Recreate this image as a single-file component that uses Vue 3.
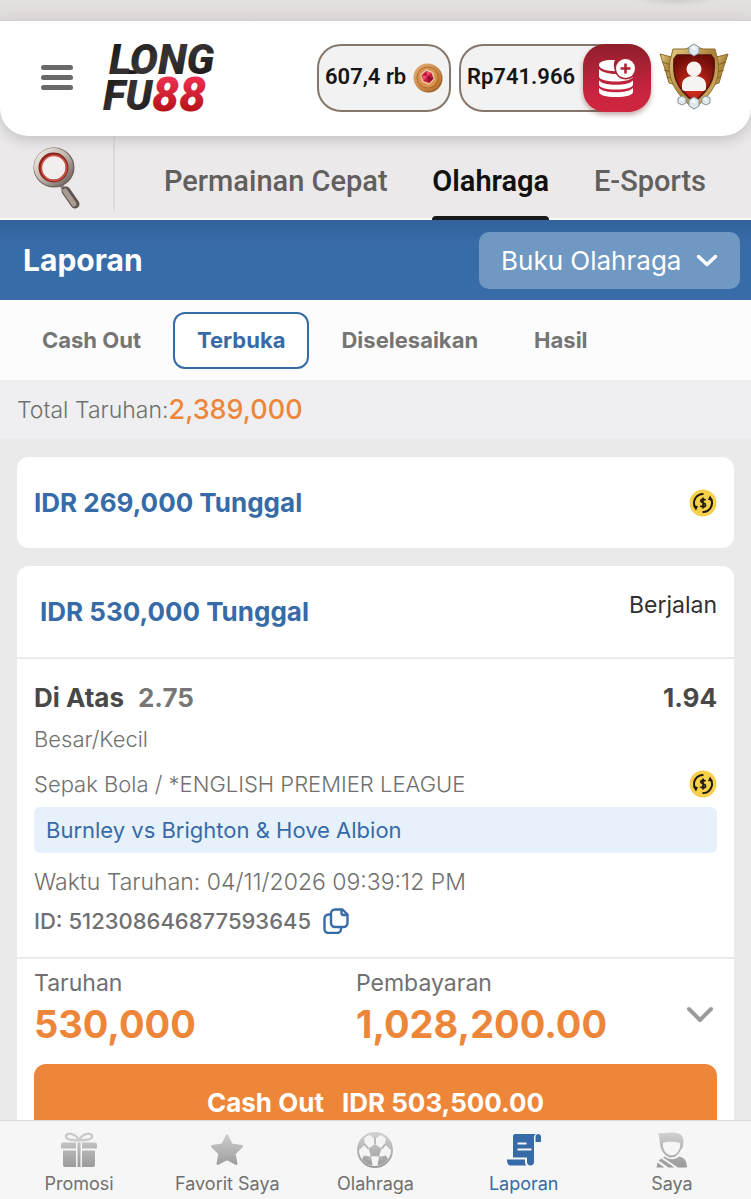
<template>
  <div class="app-shell">
    <!-- shared gradients for the icons -->
    <svg class="defs" width="0" height="0" aria-hidden="true">
      <defs>
        <linearGradient id="navGrey" x1="0" y1="0" x2="0" y2="34" gradientUnits="userSpaceOnUse">
          <stop offset="0" stop-color="#d2d2d2" />
          <stop offset="1" stop-color="#9c9c9c" />
        </linearGradient>
        <linearGradient id="logoDark" x1="0" y1="0" x2="1" y2="1">
          <stop offset="0" stop-color="#111" />
          <stop offset="0.5" stop-color="#3a3535" />
          <stop offset="1" stop-color="#111" />
        </linearGradient>
        <linearGradient id="logoRed" x1="0" y1="0" x2="0" y2="1">
          <stop offset="0.2" stop-color="#ee2f50" />
          <stop offset="0.8" stop-color="#b51218" />
        </linearGradient>
        <linearGradient id="gold" x1="0" y1="0" x2="1" y2="1">
          <stop offset="0" stop-color="#e9d08a" />
          <stop offset="0.5" stop-color="#a9823a" />
          <stop offset="1" stop-color="#e3c678" />
        </linearGradient>
        <radialGradient id="shieldRed" cx="0.5" cy="0.7" r="0.7">
          <stop offset="0" stop-color="#e0301c" />
          <stop offset="1" stop-color="#6e0d08" />
        </radialGradient>
        <linearGradient id="bronze" x1="0" y1="0" x2="1" y2="1">
          <stop offset="0" stop-color="#eab07a" />
          <stop offset="1" stop-color="#b06a22" />
        </linearGradient>
        <linearGradient id="steel" x1="0" y1="0" x2="1" y2="1">
          <stop offset="0" stop-color="#f3eee8" />
          <stop offset="0.5" stop-color="#bfb5ac" />
          <stop offset="1" stop-color="#6d625b" />
        </linearGradient>
      </defs>
    </svg>

    <div class="top-strip"></div>

    <header class="site-header">
      <button class="menu-btn" type="button" aria-label="Menu">
        <span></span><span></span><span></span>
      </button>
      <a class="logo" href="#" aria-label="LONGFU88">
        <svg width="114" height="72" viewBox="0 0 114 72">
          <path d="M10 27h14c5 2 12 2 18-2l-3 5c-4 2-8 2-12 2H9z" fill="#1d1a1a" />
          <path d="M25 20c-1 4 1 6 4 6" fill="none" stroke="#fff" stroke-width="2" />
          <text x="6" y="32" class="logo-text" fill="url(#logoDark)">LONG</text>
          <text x="0" y="68" class="logo-text" fill="url(#logoDark)">FU</text>
          <text x="49" y="69" class="logo-text logo-number" fill="url(#logoRed)">88</text>
        </svg>
      </a>

      <div class="wallet">
        <div class="pill pill-coin">
          <span>607,4 rb</span>
          <svg width="30" height="30" viewBox="0 0 30 30">
            <circle cx="15.5" cy="15.5" r="14" fill="#99601f" />
            <circle cx="14.5" cy="14.5" r="14" fill="url(#bronze)" />
            <circle cx="14.5" cy="14.5" r="10.5" fill="#d99250" stroke="#ac6b2c" />
            <path d="M13 6l7 3 2 7-6 6-7-3-2-7z" fill="#e9c3a0" />
            <path d="M13 8l5.500 2 2 5.500-4.500 4.500-5.500-2-2-5.500z" fill="#c3183a" />
            <path d="M13 8l1.500 5 4-3zM8.500 12.500l6 .5-4 5z" fill="#ee5070" />
            <path d="M14.500 13l6 2.500-4.500 4.500z" fill="#8e0f2a" />
          </svg>
        </div>
        <div class="pill pill-balance">
          <span>Rp741.966</span>
          <button class="deposit-btn" type="button" aria-label="Deposit">
            <svg width="38" height="40" viewBox="0 0 38 40" fill="#fff">
              <path d="M17 2.200C8 1.700 1 3.500 1 7s7 6.200 17 6.200c-2.500-3.500-3-7.500-1-11z" />
              <path d="M1 11c3 3.500 10 5 18 5 2 2 5 3.500 8 3.500 3 0 6-1 8-2.800v2.300c-2 3-9 4.500-17 4.500S1 22 1 18.500z" />
              <path d="M1 22.500c3 3 9 4.300 17 4.300s14-1.300 17-4.300v4c0 3-7 5-17 5s-17-2-17-5z" />
              <path d="M1 30c3 3 9 4.300 17 4.300S32 33 35 30v4c0 3-7 5-17 5s-17-2-17-5z" />
              <circle cx="27.500" cy="10.500" r="11" fill="#a92533" />
              <circle cx="27.500" cy="10.500" r="9.500" />
              <path d="M27.500 5.500v10M22.500 10.500h10" stroke="#b02434" stroke-width="2.600" />
            </svg>
          </button>
        </div>
        <a class="avatar" href="#" aria-label="Profil">
          <svg width="70" height="70" viewBox="0 0 70 70">
            <path d="M1 11l15 4 0 27-6-2-4-14z" fill="url(#gold)" stroke="#8d6c2c" />
            <path d="M69 11l-15 4 0 27 6-2 4-14z" fill="url(#gold)" stroke="#8d6c2c" />
            <path d="M3 19l12 4M5 27l10 3M8 34l8 2M67 19l-12 4M65 27l-10 3M62 34l-8 2" stroke="#7d5d22" />
            <path d="M14 6h12l9-3 9 3h12l3 12c2 16-2 30-24 48C13 48 9 34 11 18z" fill="url(#gold)" stroke="#8d6c2c" />
            <path d="M18 12h34l3 4c1 15 0 27-20 43C15 43 14 31 15 16z" fill="url(#shieldRed)" stroke="#5a1208" stroke-width="1.500" />
            <circle cx="35" cy="26" r="7.500" fill="#f6f3f1" />
            <path d="M23 42c0-6 5-9 12-9s12 3 12 9v3c0 2-1 3-3 3H26c-2 0-3-1-3-3z" fill="#f6f3f1" />
            <g fill="#dfe8ef" stroke="#8a949c">
              <path d="M35 1l5 3v6l-5 3-5-3V4z" />
              <path d="M35 54l5 3v6l-5 3-5-3v-6z" />
              <path d="M23 53l4 2v5l-4 2-4-2v-5z" />
              <path d="M47 53l4 2v5l-4 2-4-2v-5z" />
            </g>
            <path d="M32 5l3-2 2 4zM32 59l3-3 2 4zM21 57l2-2 1 3zM45 57l2-2 1 3z" fill="#fff" />
          </svg>
        </a>
      </div>
    </header>

    <nav class="category-bar">
      <button class="search-btn" type="button" aria-label="Cari">
        <svg width="48" height="62" viewBox="0 0 48 62">
          <path d="M28 38l5 7" stroke="#8f857e" stroke-width="4" />
          <path d="M33 44l9 13" stroke="#5e544e" stroke-width="9" stroke-linecap="round" />
          <path d="M32 44l9 13" stroke="#a89c92" stroke-width="5" stroke-linecap="round" />
          <ellipse cx="21" cy="20.500" rx="17.500" ry="17" fill="none" stroke="#70655e" stroke-width="6" />
          <ellipse cx="20.500" cy="20" rx="17" ry="16.500" fill="none" stroke="url(#steel)" stroke-width="5" />
          <ellipse cx="20.500" cy="20.500" rx="13.500" ry="13.500" fill="#f1efee" stroke="#8e2620" stroke-width="3" />
          <ellipse cx="21" cy="21" rx="12.500" ry="12.500" fill="none" stroke="#d3564c" stroke-width="1.500" />
        </svg>
      </button>
      <div class="category-list">
        <a
          v-for="cat in categories"
          :key="cat"
          href="#"
          class="category"
          :class="{ active: cat === activeCategory }"
          @click.prevent="activeCategory = cat"
        >{{ cat }}</a>
      </div>
    </nav>

    <main class="report">
      <div class="report-header">
        <h1>Laporan</h1>
        <div class="select-wrap">
          <select v-model="book" aria-label="Jenis laporan">
            <option>Buku Olahraga</option>
          </select>
          <svg class="select-arrow" width="22" height="14" viewBox="0 0 22 14">
            <path d="M2.500 2.500L11 10.500l8.500-8" fill="none" stroke="#fff" stroke-width="3.500" stroke-linecap="round" stroke-linejoin="round" />
          </svg>
        </div>
      </div>

      <div class="filter-tabs">
        <button
          v-for="tab in tabs"
          :key="tab"
          type="button"
          class="filter-tab"
          :class="{ active: tab === activeTab }"
          @click="activeTab = tab"
        >{{ tab }}</button>
      </div>

      <div class="total-row">
        <span>Total Taruhan:</span><strong>2,389,000</strong>
      </div>

      <div class="bet-list">
        <section class="card">
          <div class="card-head">
            <h2>IDR 269,000 Tunggal</h2>
            <svg class="cash-icon" viewBox="0 0 28 28">
              <circle cx="14" cy="14" r="13.500" fill="#f7d04a" />
              <path d="M14.500 5A9 9 0 0 0 6 18M13.500 23A9 9 0 0 0 22 10" fill="none" stroke="#1d1a12" stroke-width="2" />
              <path d="M4 16.500l5 .5-2 4.500zM24 11.500l-5-.5 2-4.500z" fill="#1d1a12" />
              <path d="M16.500 11.200c-.7-1-4.600-1.400-4.800.7-.2 2.300 5 1.700 4.900 4.200-.1 2.200-4.300 2-5.300.5M14 8.500v11" fill="none" stroke="#1d1a12" stroke-width="1.700" />
            </svg>
          </div>
        </section>

        <section class="card">
          <div class="card-head card-head-open">
            <h2>IDR 530,000 Tunggal</h2>
            <span class="status">Berjalan</span>
          </div>

          <div class="bet-body">
            <div class="row selection">
              <div>
                <strong>Di Atas</strong><span class="handicap">2.75</span>
              </div>
              <strong>1.94</strong>
            </div>
            <p class="market">Besar/Kecil</p>
            <div class="row league">
              <span>Sepak Bola / *ENGLISH PREMIER LEAGUE</span>
              <svg class="cash-icon" viewBox="0 0 28 28">
                <circle cx="14" cy="14" r="13.500" fill="#f7d04a" />
                <path d="M14.500 5A9 9 0 0 0 6 18M13.500 23A9 9 0 0 0 22 10" fill="none" stroke="#1d1a12" stroke-width="2" />
                <path d="M4 16.500l5 .5-2 4.500zM24 11.500l-5-.5 2-4.500z" fill="#1d1a12" />
                <path d="M16.500 11.200c-.7-1-4.600-1.400-4.800.7-.2 2.300 5 1.700 4.900 4.200-.1 2.200-4.300 2-5.300.5M14 8.500v11" fill="none" stroke="#1d1a12" stroke-width="1.700" />
              </svg>
            </div>
            <div class="match">Burnley vs Brighton &amp; Hove Albion</div>
            <p class="bet-time">Waktu Taruhan: 04/11/2026 09:39:12 PM</p>
            <div class="bet-id">
              <span>ID: 512308646877593645</span>
              <button class="copy-btn" type="button" aria-label="Salin ID">
                <svg width="26" height="26" viewBox="0 0 26 26" fill="none" stroke="#376ba7" stroke-width="2.400" stroke-linejoin="round">
                  <path d="M12 1.500h7.500l5 5V15a4 4 0 0 1-4 4H12a4 4 0 0 1-4-4V5.500a4 4 0 0 1 4-4z" />
                  <path d="M18.500 1.500V5a2 2 0 0 0 2 2h4" />
                  <path d="M8 6.500H5.500a4 4 0 0 0-4 4V21a4 4 0 0 0 4 4H14a4 4 0 0 0 4-4v-2" />
                </svg>
              </button>
            </div>
          </div>

          <div class="summary">
            <div class="summary-item">
              <span>Taruhan</span>
              <strong>530,000</strong>
            </div>
            <div class="summary-item">
              <span>Pembayaran</span>
              <strong>1,028,200.00</strong>
            </div>
            <button class="expand-btn" type="button" aria-label="Detail">
              <svg width="28" height="18" viewBox="0 0 28 18">
                <path d="M3 3l11 11L25 3" fill="none" stroke="#9b9b9b" stroke-width="4" stroke-linecap="round" stroke-linejoin="round" />
              </svg>
            </button>
          </div>

          <button class="cashout-btn" type="button">
            <span>Cash Out</span><span>IDR 503,500.00</span>
          </button>
        </section>
      </div>
    </main>

    <nav class="bottom-nav">
      <a href="#" class="nav-item">
        <svg width="36" height="36" viewBox="0 0 36 36" fill="url(#navGrey)">
          <path d="M0 12.500a2 2 0 0 1 2-2h13v6H0zM21 10.500h13a2 2 0 0 1 2 2v4H21zM16.500 10.500h3V35h-3zM2 18.500h13V35H4a2 2 0 0 1-2-2zM21 18.500h13V33a2 2 0 0 1-2 2H21z" />
          <path d="M18 8C14 1 5 0 5 4.500 5 8 13 8.500 18 8c5 .5 13 0 13-3.500C31 0 22 1 18 8z" fill="none" stroke="#cbcbcb" stroke-width="2.400" />
        </svg>
        <span>Promosi</span>
      </a>
      <a href="#" class="nav-item">
        <svg width="36" height="36" viewBox="0 0 36 36">
          <path d="M18 3.500l4.600 9.300 10.200 1.500-7.400 7.200 1.800 10.200L18 26.900l-9.200 4.800 1.800-10.200-7.400-7.200 10.200-1.500z" fill="url(#navGrey)" stroke="url(#navGrey)" stroke-width="2.500" stroke-linejoin="round" />
        </svg>
        <span>Favorit Saya</span>
      </a>
      <a href="#" class="nav-item">
        <svg width="36" height="36" viewBox="0 0 36 36">
          <circle cx="18" cy="18" r="17" fill="#f4f4f4" stroke="url(#navGrey)" stroke-width="2" />
          <g fill="url(#navGrey)">
            <path d="M18 12l6.500 4.700-2.500 7.600h-8l-2.500-7.600z" />
            <path d="M12 2.500c4-1.500 8-1.500 12 0l-6 4.500zM1 16l1.500-6L7 5l1 7.500L2 18zM35 16l-1.500-6L29 5l-1 7.500 6 5.500zM5 27l2-3.500 7 1.500 1.500 8.500c-5-1-8-3-10.500-6.500zM31 27l-2-3.500-7 1.500-1.500 8.500c5-1 8-3 10.500-6.500z" />
          </g>
          <path d="M18 12V6M24.500 16.700l4-4.500M22 24l3 4M14 24l-3 4M11.500 16.700l-4-4.500" stroke="#b5b5b5" stroke-width="1.800" />
        </svg>
        <span>Olahraga</span>
      </a>
      <a href="#" class="nav-item active">
        <svg width="36" height="36" viewBox="0 0 36 36" fill="#376ba7">
          <path d="M9 2h21c-1.500 1-2 2-2 4v24c0 2-1.500 3.500-3.500 3.500S21 32 21 30v-4.500H7V4c0-1 1-2 2-2z" />
          <path d="M29.500 10V5c0-4 5.500-4 5.500 0v5z" />
          <path d="M1 27.500h18V30c0 1.500.5 2.500 1.200 3.500H5c-3 0-4-2-4-6z" />
          <path d="M11.500 11.500h9M11.500 17.500h14" stroke="#f5f5f5" stroke-width="2.200" />
        </svg>
        <span>Laporan</span>
      </a>
      <a href="#" class="nav-item">
        <svg width="36" height="36" viewBox="0 0 36 36" fill="url(#navGrey)">
          <path d="M4 1c4 1 8-.5 13-.5 8 0 13 2 12.500 10 0 4-1.500 6-3 8C25 22 21 25.500 17.500 25.500S9.500 22 8 18.500C5 14 6.500 8 4 1z" />
          <path d="M9 11c4-2 12-1.500 17 0 1 7-4 12.500-8.500 12.500S8 18 9 11z" fill="#f6f6f6" />
          <path d="M11 24.500c4 3.500 10 3.500 14 0 5 1 7.500 3 8 11H24L9 25.500zM7.500 26.500l13 9h-6L4.500 28.500zM3.500 30.500l7 5H2.500z" />
        </svg>
        <span>Saya</span>
      </a>
    </nav>
  </div>
</template>

<script setup>
import { ref } from 'vue'

const categories = ['Permainan Cepat', 'Olahraga', 'E-Sports']
const activeCategory = ref('Olahraga')

const book = ref('Buku Olahraga')

const tabs = ['Cash Out', 'Terbuka', 'Diselesaikan', 'Hasil']
const activeTab = ref('Terbuka')
</script>

<style>
body {
  margin: 0;
  background: #eaeaea;
}
</style>

<style scoped>
* {
  box-sizing: border-box;
}

.app-shell {
  height: 100vh;
  display: flex;
  flex-direction: column;
  overflow: hidden;
  background: #ebe9ea;
  font-family: Inter, "Noto Sans", sans-serif;
  color: #707070;
}

.defs {
  position: absolute;
}

button {
  border: 0;
  padding: 0;
  background: none;
  font-family: inherit;
  cursor: pointer;
}

a {
  color: inherit;
  text-decoration: none;
}

h1,
h2,
p {
  margin: 0;
}

strong {
  font-weight: 700;
}

svg {
  display: block;
  flex: none;
}

/* ---------- header ---------- */
.top-strip {
  flex: none;
  height: 21px;
  background:
    radial-gradient(ellipse 42px 6px at 90% 0, #cfcbca, transparent),
    linear-gradient(#e4e0e0, #dfdbda);
}

.site-header {
  flex: none;
  height: 115px;
  display: flex;
  align-items: center;
  padding: 0 22px 2px 41px;
  background: #fff;
  border-radius: 0 0 28px 28px;
  box-shadow: 0 4px 14px rgba(60, 50, 50, 0.22);
  position: relative;
}

.menu-btn {
  width: 32px;
  display: flex;
  flex-direction: column;
  gap: 5px;
}

.menu-btn span {
  height: 5px;
  border-radius: 3px;
  background: #6b6868;
}

.logo {
  margin-left: 30px;
}

.logo svg {
  overflow: visible;
}

.logo-text {
  font-family: Roboto, sans-serif;
  font-size: 42px;
  font-weight: 900;
  font-style: italic;
}

.logo-number {
  font-size: 48px;
}

.wallet {
  margin-left: auto;
  display: flex;
  align-items: center;
  gap: 8px;
}

.pill {
  height: 68px;
  display: flex;
  align-items: center;
  justify-content: space-between;
  border: 2px solid #85776b;
  border-radius: 24px;
  background: #f2f2f2;
  font-family: Roboto, sans-serif;
  font-size: 22px;
  font-weight: 600;
  color: #151515;
  white-space: nowrap;
}

.pill span {
  padding-bottom: 3px;
}

.pill-coin {
  width: 134px;
  padding: 0 6px;
}

.pill-balance {
  width: 192px;
  border-right: 0;
  padding-left: 6px;
}

.deposit-btn {
  width: 68px;
  height: 68px;
  display: grid;
  place-items: center;
  border-radius: 22px;
  background: linear-gradient(#8f1f2b, #c92440 70%, #d0263f);
  box-shadow: 0 3px 5px rgba(90, 20, 20, 0.35);
}

/* ---------- category bar ---------- */
.category-bar {
  flex: none;
  height: 84px;
  display: flex;
  align-items: stretch;
  border-bottom: 2px solid #fafafa;
}

.search-btn {
  width: 115px;
  margin-bottom: 7px;
  padding-top: 8px;
  display: grid;
  place-items: center;
  border-right: 2px solid #dedcdd;
}

.category-list {
  flex: 1;
  display: flex;
  justify-content: space-between;
  padding: 0 45px 0 49px;
}

.category {
  display: flex;
  flex-direction: column;
  justify-content: center;
  padding-top: 5px;
  margin-bottom: -2px;
  position: relative;
  font-family: Roboto, sans-serif;
  font-size: 29px;
  font-weight: 500;
  color: #625f5f;
  white-space: nowrap;
}

.category.active {
  color: #111;
  font-weight: 600;
}

/* underline under the chosen category */
.category.active::after {
  content: "";
  position: absolute;
  left: 0;
  right: 0;
  bottom: 0;
  height: 4px;
  border-radius: 4px 4px 0 0;
  background: #161a1a;
}

/* ---------- report ---------- */
.report {
  flex: 1;
  min-height: 0;
  overflow: hidden;
  background: #eaeaea;
}

.report-header {
  height: 80px;
  display: flex;
  align-items: center;
  justify-content: space-between;
  padding: 0 11px 0 23px;
  background: linear-gradient(#32639c, #386ca8 30%);
  color: #fff;
}

.report-header h1 {
  font-size: 30px;
  font-weight: 700;
}

.select-wrap {
  position: relative;
}

.select-wrap select {
  appearance: none;
  height: 57px;
  width: 261px;
  padding: 0 50px 0 22px;
  border: 0;
  border-radius: 10px;
  background: #6f98c2;
  color: #fff;
  font-family: inherit;
  font-size: 26px;
}

.select-arrow {
  position: absolute;
  right: 22px;
  top: 22px;
  pointer-events: none;
}

.filter-tabs {
  height: 80px;
  display: flex;
  align-items: center;
  gap: 8px;
  padding: 0 18px;
  background: #fcfcfd;
}

.filter-tab {
  height: 57px;
  padding: 0 22px;
  border: 2px solid transparent;
  border-radius: 12px;
  font-size: 22px;
  font-weight: 700;
  color: #757575;
}

.filter-tab.active {
  border-color: #376ba7;
  background: #fff;
  color: #376ba7;
}

.total-row {
  height: 59px;
  display: flex;
  align-items: center;
  padding: 0 17px;
  background: #efeff1;
  font-size: 23px;
  font-weight: 300;
}

.total-row strong {
  font-size: 27px;
  font-weight: 500;
  color: #ee863a;
}

.bet-list {
  display: flex;
  flex-direction: column;
  gap: 18px;
  padding: 18px 17px;
}

.card {
  background: #fff;
  border-radius: 12px;
}

.card-head {
  height: 91px;
  display: flex;
  align-items: center;
  justify-content: space-between;
  padding: 0 17px;
}

.card-head h2 {
  font-size: 26px;
  font-weight: 700;
  line-height: 44px;
  color: #376ba7;
}

.card-head-open {
  height: 93px;
  align-items: flex-start;
  padding: 24px 17px 0 23px;
  border-bottom: 2px solid #ebebeb;
}

.status {
  font-size: 23px;
  line-height: 30px;
  color: #303030;
}

.cash-icon {
  width: 28px;
  height: 28px;
}

.bet-body {
  padding: 20px 17px 16px;
  border-bottom: 2px solid #ebebeb;
  font-size: 22px;
  font-weight: 300;
}

.row {
  display: flex;
  align-items: center;
  justify-content: space-between;
}

.selection {
  font-size: 26px;
  font-weight: 700;
  line-height: 38px;
  color: #484848;
}

.handicap {
  margin-left: 14px;
  color: #777;
}

.market {
  line-height: 44px;
}

.league {
  line-height: 46px;
}

.match {
  padding: 0 12px;
  border-radius: 6px;
  background: #e7f1fc;
  line-height: 46px;
  font-weight: 400;
  color: #376ba7;
}

.bet-time {
  margin-top: 10px;
  font-size: 23px;
  line-height: 38px;
}

.bet-id {
  display: flex;
  align-items: center;
  gap: 12px;
  font-weight: 500;
  line-height: 40px;
}

.summary {
  display: grid;
  grid-template-columns: 322px 1fr auto;
  align-items: center;
  padding: 7px 20px 16px 17px;
}

.summary-item {
  display: flex;
  flex-direction: column;
  font-size: 23px;
  line-height: 34px;
}

.summary-item strong {
  font-size: 38px;
  line-height: 48px;
  color: #ee863a;
}

.expand-btn {
  padding-top: 16px;
}

.cashout-btn {
  width: calc(100% - 34px);
  height: 76px;
  margin: 0 17px 17px;
  display: flex;
  align-items: center;
  justify-content: center;
  gap: 18px;
  border-radius: 12px;
  background: #ee863a;
  color: #fff;
  font-size: 26px;
  font-weight: 700;
}

/* ---------- bottom nav ---------- */
.bottom-nav {
  flex: none;
  height: 79px;
  display: grid;
  grid-template-columns: repeat(5, 1fr);
  padding: 0 5px;
  border-top: 1px solid #dcdcdc;
  background: #f6f6f6;
}

.nav-item {
  display: flex;
  flex-direction: column;
  align-items: center;
  gap: 4px;
  padding-top: 11px;
  font-size: 18px;
  line-height: 24px;
}

.nav-item.active {
  color: #376ba7;
}
</style>
